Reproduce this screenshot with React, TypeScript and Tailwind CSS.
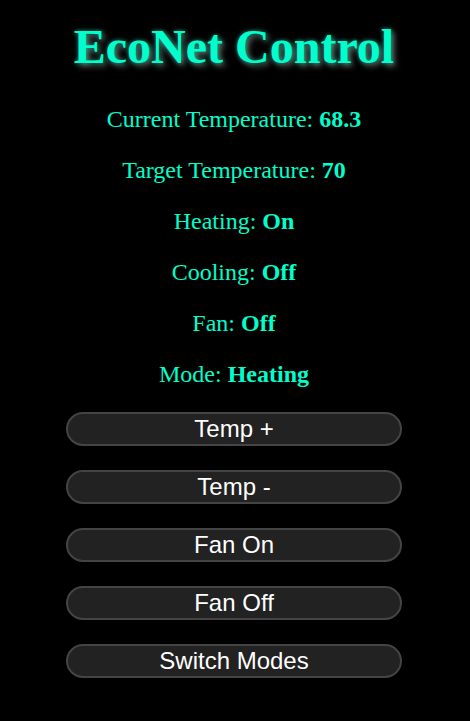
import React from "react";

const rows: [string, string][] = [
  ["Current Temperature", "68.3"],
  ["Target Temperature", "70"],
  ["Heating", "On"],
  ["Cooling", "Off"],
  ["Fan", "Off"],
  ["Mode", "Heating"],
];

const buttons = ["Temp +", "Temp -", "Fan On", "Fan Off", "Switch Modes"];

export default function App() {
  return (
    <div className="min-h-[721px] w-full bg-black flex flex-col items-center pr-[2px] font-['Liberation_Serif',serif] text-[#00ffcc]">
      <h1 className="mt-[18px] text-[48px] font-bold leading-[58px] [text-shadow:0_0_5px_rgba(0,255,204,0.5),3px_3px_6px_#666]">
        EcoNet Control
      </h1>
      <div className="mt-[31px] flex flex-col items-center gap-[27px]">
        {rows.map(([k, v]) => (
          <p key={k} className="text-[24px] leading-[24px]">
            {k}: <b>{v}</b>
          </p>
        ))}
      </div>
      <div className="mt-[26px] flex flex-col items-center gap-[24px]">
        {buttons.map((b) => (
          <button
            key={b}
            className="w-[336px] h-[34px] rounded-full border-2 border-[#444] bg-[#222] text-white text-[24px] font-['Liberation_Sans',Arial,sans-serif] leading-none"
          >
            {b}
          </button>
        ))}
      </div>
    </div>
  );
}
